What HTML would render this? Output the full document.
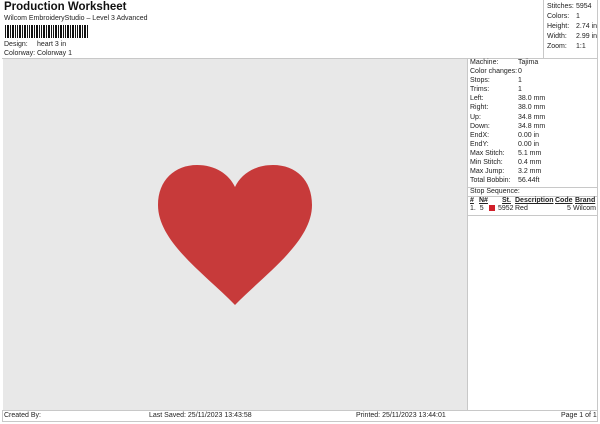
<!DOCTYPE html>
<html><head><style>
body{margin:0;width:600px;height:424px;background:#fff;font-family:"Liberation Sans",sans-serif;font-size:7px;color:#222;position:relative;overflow:hidden}
.a{position:absolute;white-space:nowrap}
.ln{position:absolute;background:#c8c8c8}
</style></head><body>
<div class="a" style="left:4px;top:1px;font-size:11.5px;font-weight:bold;color:#111">Production Worksheet</div>
<div class="a" style="left:4px;top:15px">Wilcom EmbroideryStudio – Level 3 Advanced</div>
<svg class="a" style="left:5px;top:25px" width="85" height="13">
<g fill="#111">
<rect x="0" y="0" width="1" height="13"/><rect x="2" width="2" height="13"/><rect x="5" width="1" height="13"/><rect x="7" width="2" height="13"/><rect x="10" width="1" height="13"/><rect x="12" width="1" height="13"/><rect x="14" width="2" height="13"/><rect x="17" width="1" height="13"/><rect x="19" width="2" height="13"/><rect x="22" width="1" height="13"/><rect x="24" width="1" height="13"/><rect x="26" width="2" height="13"/><rect x="29" width="1" height="13"/><rect x="31" width="2" height="13"/><rect x="34" width="1" height="13"/><rect x="36" width="1" height="13"/><rect x="38" width="2" height="13"/><rect x="41" width="1" height="13"/><rect x="43" width="2" height="13"/><rect x="46" width="1" height="13"/><rect x="48" width="1" height="13"/><rect x="50" width="2" height="13"/><rect x="53" width="1" height="13"/><rect x="55" width="2" height="13"/><rect x="58" width="1" height="13"/><rect x="60" width="1" height="13"/><rect x="62" width="2" height="13"/><rect x="65" width="1" height="13"/><rect x="67" width="2" height="13"/><rect x="70" width="1" height="13"/><rect x="72" width="1" height="13"/><rect x="74" width="2" height="13"/><rect x="77" width="1" height="13"/><rect x="79" width="2" height="13"/><rect x="82" width="1" height="13"/>
</g></svg>
<div class="a" style="left:4px;top:41px">Design:</div><div class="a" style="left:37px;top:41px">heart 3 in</div>
<div class="a" style="left:4px;top:50px">Colorway:</div><div class="a" style="left:37px;top:50px">Colorway 1</div>

<div class="ln" style="left:543px;top:0;width:1px;height:58px"></div>
<div class="a" style="left:547px;top:2px;line-height:10px">Stitches:<br>Colors:<br>Height:<br>Width:<br>Zoom:</div>
<div class="a" style="left:576px;top:2px;line-height:10px">5954<br>1<br>2.74 in<br>2.99 in<br>1:1</div>

<div class="ln" style="left:2px;top:58px;width:596px;height:1px"></div>
<div class="a" style="left:3px;top:59px;width:464px;height:351px;background:#e8e8e8"></div>
<svg class="a" style="left:0;top:0" width="600" height="424"><path d="M235 305 C205 274,158 242,158 205 C158 180,175 165,197 165 C215 165,229 174,235 187 C241 174,255 165,273 165 C296 165,312 180,312 205 C312 242,265 274,235 305Z" fill="#c73a3a"/></svg>
<div class="ln" style="left:467px;top:58px;width:1px;height:353px"></div>
<div class="ln" style="left:597px;top:0;width:1px;height:422px"></div>

<div class="a" style="left:470px;top:58px;line-height:9.1px">Machine:<br>Color changes:<br>Stops:<br>Trims:<br>Left:<br>Right:<br>Up:<br>Down:<br>EndX:<br>EndY:<br>Max Stitch:<br>Min Stitch:<br>Max Jump:<br>Total Bobbin:</div>
<div class="a" style="left:518px;top:58px;line-height:9.1px">Tajima<br>0<br>1<br>1<br>38.0 mm<br>38.0 mm<br>34.8 mm<br>34.8 mm<br>0.00 in<br>0.00 in<br>5.1 mm<br>0.4 mm<br>3.2 mm<br>56.44ft</div>
<div class="ln" style="left:468px;top:187px;width:130px;height:1px"></div>
<div class="a" style="left:470px;top:188px">Stop Sequence:</div>
<div class="ln" style="left:468px;top:196px;width:130px;height:1px"></div>
<div class="a" style="left:470px;top:197px;font-weight:bold;text-decoration:underline">#</div>
<div class="a" style="left:479px;top:197px;font-weight:bold;text-decoration:underline">N#</div>
<div class="a" style="left:502px;top:197px;font-weight:bold;text-decoration:underline">St.</div>
<div class="a" style="left:515px;top:197px;font-weight:bold;text-decoration:underline">Description</div>
<div class="a" style="left:555px;top:197px;font-weight:bold;text-decoration:underline">Code</div>
<div class="a" style="left:575px;top:197px;font-weight:bold;text-decoration:underline">Brand</div>
<div class="a" style="left:470px;top:205px">1.&nbsp; 5</div>
<div class="a" style="left:489px;top:205px;width:6px;height:6px;background:#d11f2a"></div>
<div class="a" style="left:498px;top:205px">5952</div>
<div class="a" style="left:515px;top:205px">Red</div>
<div class="a" style="left:567px;top:205px">5</div>
<div class="a" style="left:573px;top:205px">Wilcom</div>
<div class="ln" style="left:468px;top:215px;width:130px;height:1px"></div>

<div class="ln" style="left:2px;top:410px;width:596px;height:1px"></div>
<div class="ln" style="left:2px;top:421px;width:596px;height:1px"></div>
<div class="ln" style="left:2px;top:410px;width:1px;height:12px"></div>
<div class="a" style="left:4px;top:412px">Created By:</div>
<div class="a" style="left:149px;top:412px">Last Saved: 25/11/2023 13:43:58</div>
<div class="a" style="left:356px;top:412px">Printed: 25/11/2023 13:44:01</div>
<div class="a" style="left:561px;top:412px">Page 1 of 1</div>
</body></html>
